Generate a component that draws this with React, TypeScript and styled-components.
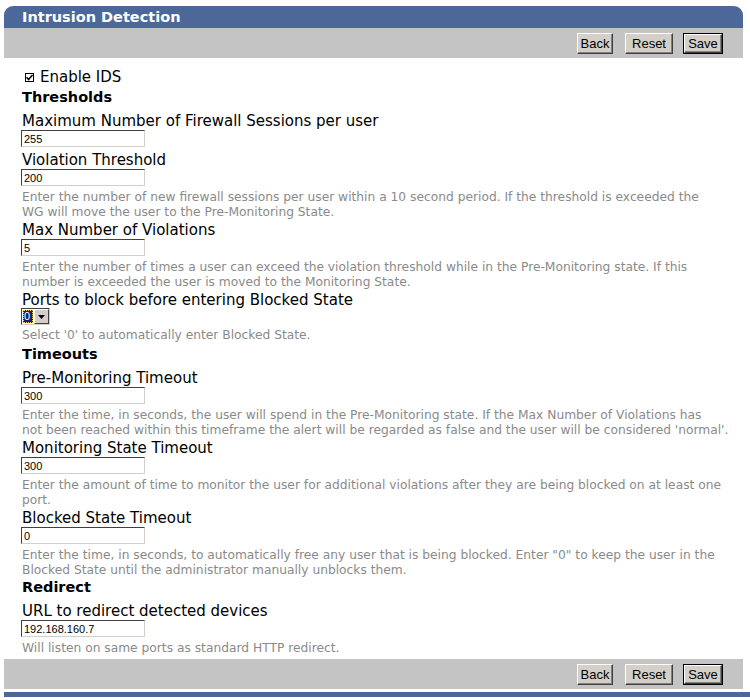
import React from 'react';
import styled, {createGlobalStyle} from 'styled-components';

const GlobalStyle = createGlobalStyle`
  body {
    margin: 0;
    background: #fff;
    font-family: "DejaVu Sans", Verdana, sans-serif;
    color: #000;
  }
`;

type FieldDef = {
  label: string;
  value: string;
  help?: string[];
};

const thresholds: FieldDef[] = [
  {label: 'Maximum Number of Firewall Sessions per user', value: '255'},
  {
    label: 'Violation Threshold',
    value: '200',
    help: [
      'Enter the number of new firewall sessions per user within a 10 second period. If the threshold is exceeded the',
      'WG will move the user to the Pre-Monitoring State.',
    ],
  },
  {
    label: 'Max Number of Violations',
    value: '5',
    help: [
      'Enter the number of times a user can exceed the violation threshold while in the Pre-Monitoring state. If this',
      'number is exceeded the user is moved to the Monitoring State.',
    ],
  },
];

const timeouts: FieldDef[] = [
  {
    label: 'Pre-Monitoring Timeout',
    value: '300',
    help: [
      'Enter the time, in seconds, the user will spend in the Pre-Monitoring state. If the Max Number of Violations has',
      "not been reached within this timeframe the alert will be regarded as false and the user will be considered 'normal'.",
    ],
  },
  {
    label: 'Monitoring State Timeout',
    value: '300',
    help: [
      'Enter the amount of time to monitor the user for additional violations after they are being blocked on at least one',
      'port.',
    ],
  },
  {
    label: 'Blocked State Timeout',
    value: '0',
    help: [
      'Enter the time, in seconds, to automatically free any user that is being blocked. Enter "0" to keep the user in the',
      'Blocked State until the administrator manually unblocks them.',
    ],
  },
];

const Field: React.FC<{def: FieldDef}> = ({def}) => (
  <FieldBox>
    <Label>{def.label}</Label>
    <TextInput defaultValue={def.value} />
    {def.help && (
      <Help>
        {def.help.map((line) => (
          <div key={line}>{line}</div>
        ))}
      </Help>
    )}
  </FieldBox>
);

const Buttons: React.FC = () => (
  <>
    <Button $w={36} $space={12}>Back</Button>
    <Button $w={48} $space={10}>Reset</Button>
    <Button $w={38} $primary>Save</Button>
  </>
);

export default function App() {
  return (
    <Page>
      <GlobalStyle />
      <TitleBar>Intrusion Detection</TitleBar>
      <Toolbar>
        <Buttons />
      </Toolbar>

      <Content>
        <CheckRow>
          <CheckBox>
            <svg width="7" height="7" viewBox="0 0 7 7">
              <path d="M0.6 3.2 L2.6 5.6 L6.5 0.9" stroke="#000" strokeWidth="1.5" fill="none" />
            </svg>
          </CheckBox>
          Enable IDS
        </CheckRow>

        <SectionTitle>Thresholds</SectionTitle>
        {thresholds.map((f) => (
          <Field key={f.label} def={f} />
        ))}
        <FieldBox $tail={2}>
          <Label>Ports to block before entering Blocked State</Label>
          <Select>
            <SelectValue>
              <span>0</span>
            </SelectValue>
            <SelectArrow>
              <svg width="7" height="4" viewBox="0 0 7 4">
                <path d="M0 0 H7 L3.5 4 Z" fill="#000" />
              </svg>
            </SelectArrow>
          </Select>
          <Help>Select '0' to automatically enter Blocked State.</Help>
        </FieldBox>

        <SectionTitle>Timeouts</SectionTitle>
        {timeouts.map((f) => (
          <Field key={f.label} def={f} />
        ))}

        <SectionTitle>Redirect</SectionTitle>
        <Field
          def={{
            label: 'URL to redirect detected devices',
            value: '192.168.160.7',
            help: ['Will listen on same ports as standard HTTP redirect.'],
          }}
        />
      </Content>

      <Toolbar>
        <Buttons />
      </Toolbar>
      <BottomRule />
    </Page>
  );
}

const Page = styled.div`
  width: 739px;
  padding: 6px 0 0 4px;
`;

const TitleBar = styled.div`
  height: 22px;
  background: #4b6899;
  border-radius: 9px 9px 0 0;
  color: #fff;
  font-weight: bold;
  font-size: 14.5px;
  line-height: 22px;
  padding-left: 18px;
`;

const Toolbar = styled.div`
  height: 30px;
  background: #c4c4c4;
  display: flex;
  align-items: center;
  justify-content: flex-end;
  padding-right: 20px;
`;

const Button = styled.button<{$w: number; $space?: number; $primary?: boolean}>`
  box-sizing: border-box;
  width: ${(p) => p.$w}px;
  height: ${(p) => (p.$primary ? '19px' : '21px')};
  padding: 0;
  margin: 0 ${(p) => (p.$primary ? 1 : p.$space ?? 0)}px 0 ${(p) => (p.$primary ? 1 : 0)}px;
  font-family: "Liberation Sans", Arial, sans-serif;
  font-size: 13px;
  color: #000;
  background: #d4d0c8;
  border: 1px solid;
  border-color: #fff #404040 #404040 #fff;
  box-shadow: inset -1px -1px 0 #808080;
  outline: ${(p) => (p.$primary ? '1px solid #000' : 'none')};
  outline-offset: 0;
  cursor: pointer;
`;

const Content = styled.div`
  display: flex;
  flex-direction: column;
  padding: 10px 0 4px 18px;
`;

const CheckRow = styled.div`
  display: flex;
  align-items: center;
  gap: 6px;
  height: 18px;
  margin-bottom: 1px;
  padding-left: 3px;
  font-size: 15px;
`;

const CheckBox = styled.span`
  width: 7px;
  height: 7px;
  border: 1px solid #000;
  display: inline-flex;
  align-items: center;
  justify-content: center;
  background: #fff;
`;

const SectionTitle = styled.div`
  margin-top: 1px;
  margin-bottom: 4px;
  font-weight: bold;
  font-size: 14.5px;
  line-height: 18px;
`;

const FieldBox = styled.div<{$tail?: number}>`
  display: flex;
  flex-direction: column;
  align-items: flex-start;
  margin-top: 2px;
  margin-bottom: ${(p) => p.$tail ?? 0}px;
`;

const Label = styled.div`
  font-size: 15px;
  line-height: 18px;
`;

const TextInput = styled.input`
  box-sizing: border-box;
  width: 124px;
  height: 17px;
  margin: 0 0 2px -1px;
  padding: 0 2px;
  font-family: "Liberation Sans", Arial, sans-serif;
  font-size: 11px;
  border: 1px solid;
  border-color: #404040 #d4d0c8 #d4d0c8 #404040;
  outline: none;
`;

const Help = styled.div`
  margin: 2px 0 -1px;
  font-size: 12.25px;
  line-height: 15px;
  color: #8a8a8a;
`;

const Select = styled.div`
  display: flex;
  width: 29px;
  height: 17px;
  margin: -1px 0 1px -1px;
  box-sizing: border-box;
  border: 1px solid;
  border-color: #404040 #d4d0c8 #d4d0c8 #404040;
  background: #fff;
`;

const SelectValue = styled.div`
  flex: 1;
  padding: 1px;
  display: flex;

  span {
    flex: 1;
    background: #0a246a;
    color: #fff;
    outline: 1px dotted #e8d060;
    outline-offset: -1px;
    font-family: "Liberation Sans", Arial, sans-serif;
    font-size: 11px;
    line-height: 13px;
    padding-left: 1px;
  }
`;

const SelectArrow = styled.div`
  width: 13px;
  background: #d4d0c8;
  border: 1px solid;
  border-color: #fff #404040 #404040 #fff;
  display: flex;
  align-items: center;
  justify-content: center;
`;

const BottomRule = styled.div`
  height: 5px;
  margin-top: 3px;
  margin-right: -20px;
  background: #4b6899;
`;
